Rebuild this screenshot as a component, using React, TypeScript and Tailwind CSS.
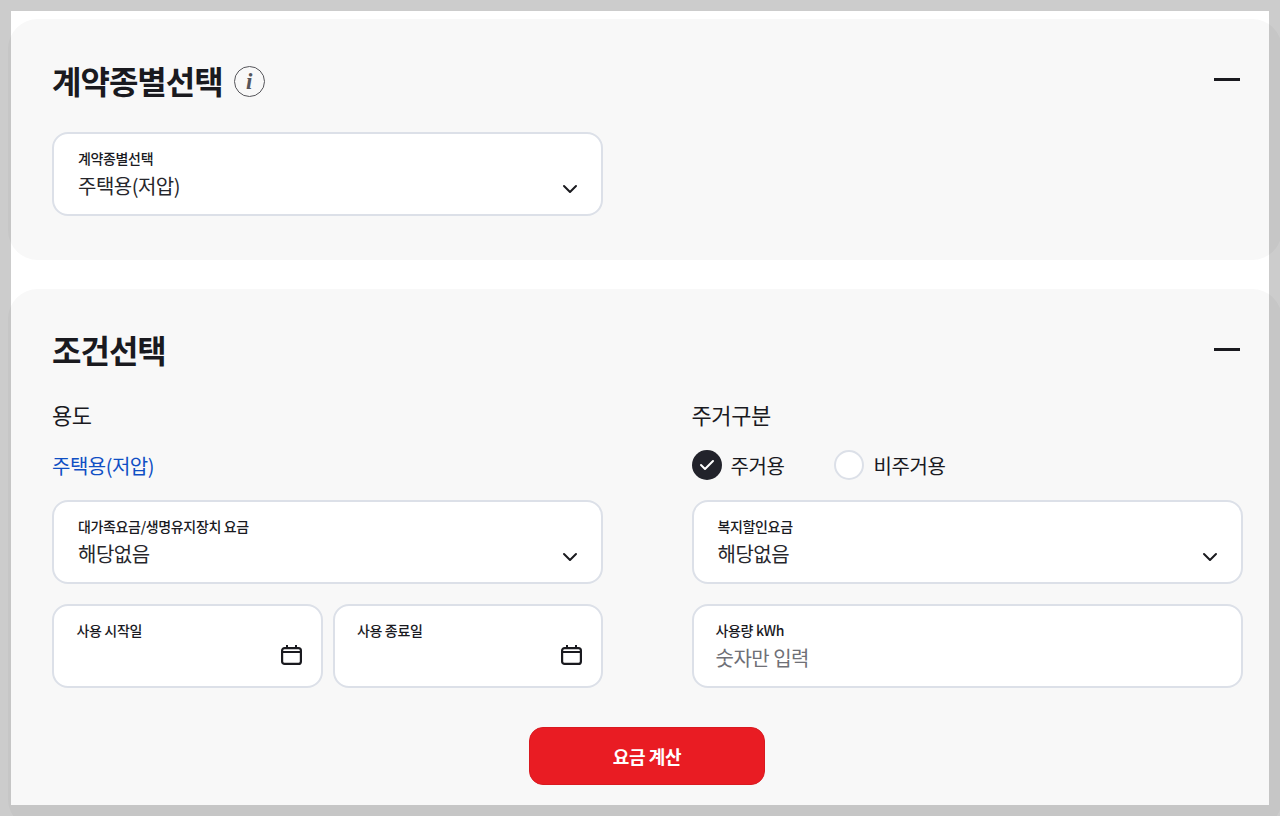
const font = "font-['Noto_Sans_CJK_KR','Noto_Sans',sans-serif]"

function Chevron() {
  return (
    <svg width="16" height="10" viewBox="0 0 16 10" fill="none" className="shrink-0">
      <path d="M2 2l6 6 6-6" stroke="#1a1a1f" strokeWidth="2" strokeLinecap="round" strokeLinejoin="round" />
    </svg>
  )
}

function Calendar() {
  return (
    <svg width="21" height="20" viewBox="0 0 21 20" fill="none" className="shrink-0">
      <rect x="1.1" y="3.1" width="18.8" height="15.8" rx="2.5" stroke="#1a1a1f" strokeWidth="2.2" />
      <path d="M1 7h19" stroke="#1a1a1f" strokeWidth="2" />
      <path d="M6 0v3M15 0v3" stroke="#1a1a1f" strokeWidth="2" />
    </svg>
  )
}

function Minus() {
  return <div className="h-[3px] w-[26px] bg-[#1a1a1f]" />
}

function SelectBox({ label, value }: { label: string; value: string }) {
  return (
    <div className="flex h-[84px] w-full items-end justify-between rounded-[16px] border-2 border-[#dce0e8] bg-white pr-[23px] pb-[15px] pl-[24px]">
      <div className="flex flex-col">
        <span className="text-[14px] leading-[20px] font-medium tracking-[-0.35px] text-[#1a1a1f]">{label}</span>
        <span className="mt-[5px] text-[20px] leading-[26px] tracking-[-0.5px] text-[#26262b]">{value}</span>
      </div>
      <div className="pb-[5px]">
        <Chevron />
      </div>
    </div>
  )
}

function DateBox({ label }: { label: string }) {
  return (
    <div className="flex h-[84px] flex-1 flex-col rounded-[16px] border-2 border-[#dce0e8] bg-white pt-[14px] pr-[19px] pl-[22.5px]">
      <span className="text-[14px] leading-[20px] font-medium tracking-[-0.35px] text-[#1a1a1f]">{label}</span>
      <div className="mt-[5px] flex justify-end">
        <Calendar />
      </div>
    </div>
  )
}

export default function App() {
  return (
    <div className={`relative h-[816px] w-[1280px] overflow-hidden bg-white pt-[19px] pl-[8px] ${font}`}>
      <section className="h-[241px] w-[1274px] rounded-[30px] bg-[#f8f8f8] pt-[40px] pl-[44px]">
        <div className="flex w-[1188px] items-start justify-between">
          <div className="flex items-center gap-[11px]">
            <h2 className="text-[32px] leading-[42px] font-bold tracking-[-1px] text-[#1a1a1f]">계약종별선택</h2>
            <div className="mt-[3px] flex h-[31px] w-[31px] items-center justify-center rounded-full border border-[#55555a] font-['Liberation_Serif',serif] text-[23px] leading-none font-bold text-[#55555a] italic">
              i
            </div>
          </div>
          <div className="mt-[19px]">
            <Minus />
          </div>
        </div>
        <div className="mt-[31px] w-[551px]">
          <SelectBox label="계약종별선택" value="주택용(저압)" />
        </div>
      </section>

      <section className="mt-[29px] h-[540px] w-[1274px] rounded-[30px] bg-[#f8f8f8] pt-[39px] pl-[44px]">
        <div className="flex w-[1188px] items-start justify-between">
          <h2 className="text-[32px] leading-[42px] font-bold tracking-[-1px] text-[#1a1a1f]">조건선택</h2>
          <div className="mt-[20px]">
            <Minus />
          </div>
        </div>
        <div className="mt-[29px] flex w-[1191px] gap-[88.5px]">
          <div className="w-[551px]">
            <div className="text-[22px] leading-[30px] tracking-[-0.4px] text-[#1a1a1f]">용도</div>
            <div className="mt-[22px] h-[30px] text-[20px] leading-[30px] tracking-[-0.5px] text-[#0f4fc4]">주택용(저압)</div>
            <div className="mt-[19px]">
              <SelectBox label="대가족요금/생명유지장치 요금" value="해당없음" />
            </div>
            <div className="mt-[20px] flex gap-[10px]">
              <DateBox label="사용 시작일" />
              <DateBox label="사용 종료일" />
            </div>
          </div>
          <div className="w-[551px]">
            <div className="text-[22px] leading-[30px] tracking-[-0.4px] text-[#1a1a1f]">주거구분</div>
            <div className="mt-[21px] flex h-[30px] items-center">
              <div className="flex h-[30px] w-[30px] items-center justify-center rounded-full bg-[#22232b]">
                <svg width="16" height="12" viewBox="0 0 16 12" fill="none">
                  <path d="M2 6l4 4 8-8" stroke="#fff" strokeWidth="2" strokeLinecap="round" strokeLinejoin="round" />
                </svg>
              </div>
              <span className="mt-[1px] ml-[9px] text-[20px] leading-[30px] tracking-[-0.4px] text-[#1a1a1f]">주거용</span>
              <div className="ml-[49px] h-[30px] w-[30px] rounded-full border-2 border-[#dce0e8] bg-white" />
              <span className="mt-[1px] ml-[10px] text-[20px] leading-[30px] tracking-[-0.4px] text-[#1a1a1f]">비주거용</span>
            </div>
            <div className="mt-[20px]">
              <SelectBox label="복지할인요금" value="해당없음" />
            </div>
            <div className="mt-[20px] flex h-[84px] flex-col rounded-[16px] border-2 border-[#dce0e8] bg-white pt-[14px] pl-[22px]">
              <span className="text-[14px] leading-[20px] font-medium tracking-[-0.35px] text-[#1a1a1f]">사용량 kWh</span>
              <span className="mt-[5px] text-[20px] leading-[26px] tracking-[-0.5px] text-[#6f7076]">숫자만 입력</span>
            </div>
          </div>
        </div>
        <div className="mt-[39px] flex w-[1190px] justify-center">
          <button className="h-[58px] w-[236px] rounded-[14px] border border-[#d91a20] bg-[#e91c23] text-[18px] font-bold tracking-[-0.4px] text-white">
            요금 계산
          </button>
        </div>
      </section>

      {/* translucent frame laid over the page */}
      <div className="pointer-events-none absolute inset-0 border-[11px] border-black/20" />
    </div>
  )
}
